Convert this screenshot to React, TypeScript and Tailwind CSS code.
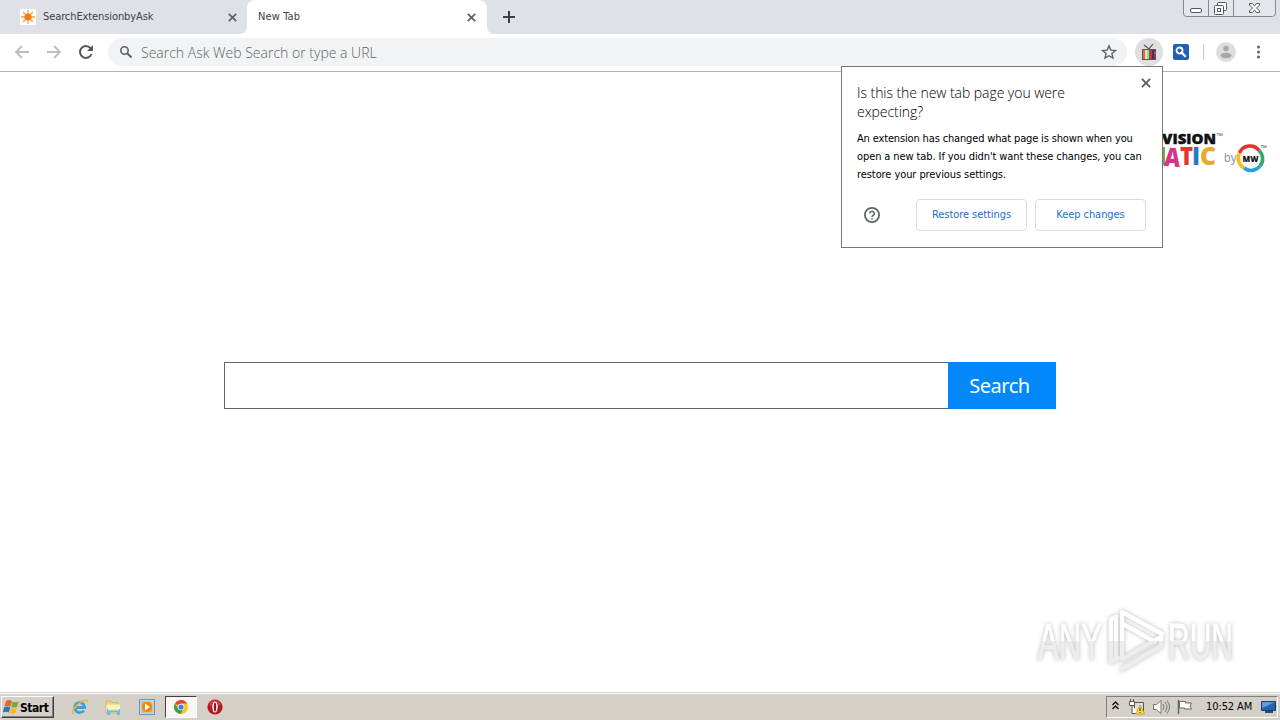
import { ReactNode } from 'react';

const CloseIcon = ({ size = 9 }: { size?: number }) => (
  <svg width={size} height={size} viewBox="0 0 9 9" stroke="#5f6368" strokeWidth="1.8">
    <path d="M.8.8l7.4 7.4M8.2.8L.8 8.2" />
  </svg>
);

const Favicon = () => (
  <svg width="16" height="16" viewBox="0 0 16 16">
    <path fill="#fff" d="M0 0h16v16H0z" />
    <path stroke="#f6a04d" strokeWidth="1.3" d="M8 1v14M1 8h14M3 3l10 10M13 3L3 13" />
    <circle cx="8" cy="8" r="3.6" fill="#ef7d1a" />
  </svg>
);

const WindowControls = () => (
  <svg width="94" height="18" viewBox="0 0 94 18" fill="none" stroke="#85888e">
    <path fill="#e3e6ec" d="M.5 0v13q0 3.5 3 3.5h86q3 0 3-3.5V0" />
    <path d="M25.500 0v16.500M50.500 0v16.500" />
    <g stroke="#53575e">
      <rect x="7.500" y="8.500" width="11" height="4" rx="1.500" fill="#fff" />
      <rect x="34.500" y="2.500" width="9" height="8" rx="1" fill="#fff" />
      <rect x="31.500" y="5.500" width="9" height="9" rx="1" fill="#fff" />
      <rect x="34.500" y="8.500" width="3" height="3" />
    </g>
    <path stroke="#53575e" fill="#fff" d="M66.500 3.500h3l2 2.500 2-2.500h3v1.500l-3 3 3 3v1.500h-3l-2-2.500-2 2.500h-3V11l3-3-3-3z" />
  </svg>
);

const TabStrip = () => (
  <div className="flex h-[34px] bg-[#dee1e8] text-[11px] text-[#3c4043]">
    <div className="flex w-[247px] items-center pl-5 pr-[10px]">
      <Favicon />
      <span className="ml-[7px] flex-1 pt-px tracking-[-0.1px]">SearchExtensionbyAsk</span>
      <CloseIcon />
    </div>
    <div className="relative flex w-[240px] items-center rounded-t-lg bg-white pl-[11px] pr-[11px]">
      <svg className="absolute -left-2 bottom-0" width="8" height="8" fill="#fff">
        <path d="M8 0v8H0q8 0 8-8" />
      </svg>
      <svg className="absolute -right-2 bottom-0" width="8" height="8" fill="#fff">
        <path d="M0 0v8h8q-8 0-8-8" />
      </svg>
      <span className="flex-1 pt-px tracking-[0.12px]">New Tab</span>
      <CloseIcon />
    </div>
    <div className="flex flex-1 items-center pl-4">
      <svg width="12" height="12" stroke="#3c4043" strokeWidth="2">
        <path d="M6 0v12M0 6h12" />
      </svg>
    </div>
    <div className="mr-[3px]">
      <WindowControls />
    </div>
  </div>
);

const TvIcon = () => (
  <svg width="16" height="17" viewBox="0 0 16 17">
    <path d="M3 1l5 4 4-5" fill="none" stroke="#555" strokeWidth="1.200" />
    <path fill="#5b5258" d="M1 5h14v11H1z" />
    <path fill="#ef625c" d="M2 6h2v9H2z" />
    <path fill="#f2dfac" d="M4 6h2v9H4z" />
    <path fill="#8ee092" d="M6 6h2v9H6z" />
    <path fill="#26874e" d="M8 6h1v9H8z" />
    <path fill="#d52b48" d="M9 6h2v9H9z" />
    <path fill="#64216b" d="M11 6h2v9h-2z" />
    <path fill="#b58b76" d="M13.500 8h1v2h-1z" />
  </svg>
);

const Toolbar = () => (
  <div className="flex h-[38px] items-center border-b border-[#b3b3b3] bg-white pb-px">
    <svg className="ml-[15px]" width="14" height="14" fill="none" stroke="#babcbe" strokeWidth="1.800">
      <path d="M14 7H1M7 1L1 7l6 6" />
    </svg>
    <svg className="ml-[18px]" width="14" height="14" fill="none" stroke="#babcbe" strokeWidth="1.800">
      <path d="M0 7h13M7 1l6 6-6 6" />
    </svg>
    <svg className="ml-[18px]" width="14" height="14" fill="none" stroke="#56595d" strokeWidth="2">
      <path d="M12.500 9A5.900 5.900 0 1 1 11.500 3.200L13 5" />
      <path fill="#56595d" stroke="none" d="M14 0v6H8z" />
    </svg>
    <div className="ml-[15px] flex h-7 w-[1019px] items-center rounded-full bg-[#f1f3f4] pl-3 pr-[10px]">
      <svg width="12" height="12" fill="none" stroke="#5f6368" strokeWidth="1.600">
        <circle cx="4.500" cy="4.500" r="3.700" />
        <path d="M7.200 7.200l4.300 4.300" strokeWidth="2" />
      </svg>
      <span className="ml-[9px] flex-1 font-['Open_Sans','Noto_Sans',sans-serif] text-[14px] font-light text-[#5f6368]">
        Search Ask Web Search or type a URL
      </span>
      <svg width="16" height="16" viewBox="0 0 16 16" fill="none" stroke="#5f6368" strokeWidth="1.400">
        <path d="M8 1.800l1.800 4.300 4.700.4-3.600 3 1.100 4.600L8 11.700l-4 2.400 1.100-4.600-3.600-3 4.700-.4z" />
      </svg>
    </div>
    <div className="ml-2 flex h-7 w-7 items-center justify-center rounded-full bg-[#dedfe0]">
      <TvIcon />
    </div>
    <svg className="ml-[10px]" width="16" height="16" fill="none" stroke="#fff" strokeWidth="1.800">
      <rect width="16" height="16" rx="2" fill="#2360b3" stroke="none" />
      <circle cx="6.500" cy="6.500" r="3" />
      <path d="M8.800 8.800l4 4" strokeWidth="2.200" />
    </svg>
    <div className="ml-[14px] h-4 w-px bg-[#c9cacc]" />
    <svg className="ml-3" width="20" height="20" fill="#a6a8aa">
      <circle cx="10" cy="10" r="10" fill="#dddedf" />
      <circle cx="10" cy="6.500" r="2.800" />
      <ellipse cx="10" cy="13.500" rx="5.500" ry="2.800" />
    </svg>
    <svg className="ml-5" width="5" height="14" fill="#5f6368">
      <circle cx="2.500" cy="2" r="1.500" />
      <circle cx="2.500" cy="7" r="1.500" />
      <circle cx="2.500" cy="12" r="1.500" />
    </svg>
  </div>
);

const BrandLogo = () => (
  <svg className="absolute right-0 top-[56px]" width="120" height="48" viewBox="1160 128 120 48">
    <g fontFamily="Open Sans, sans-serif" fontWeight="800">
      <text x="1162" y="143.500" fontSize="13.500" textLength="54" lengthAdjust="spacingAndGlyphs" fill="#111" stroke="#111" strokeWidth=".4">VISION</text>
      <path fill="#78a840" d="M1160 147h5v18h-5z" />
      <text x="1164.500" y="166.500" fontSize="26" textLength="16" lengthAdjust="spacingAndGlyphs" fill="#d5348b" transform="rotate(4 1172 157)">A</text>
      <text x="1180" y="164.500" fontSize="25" textLength="13" lengthAdjust="spacingAndGlyphs" fill="#e5352c">T</text>
      <path fill="#2879bd" d="M1183" />
      <text x="1192" y="164.500" fontSize="25" textLength="8" lengthAdjust="spacingAndGlyphs" fill="#2879bd">I</text>
      <text x="1200" y="164.500" fontSize="25" textLength="16" lengthAdjust="spacingAndGlyphs" fill="#eda829">C</text>
    </g>
    <text x="1216" y="138" fontSize="7" fill="#555" fontFamily="Liberation Sans">™</text>
    <text x="1224" y="162" fontSize="12" fill="#999" fontFamily="Liberation Sans">by</text>
    <g fill="none" strokeWidth="3.600">
      <path stroke="#e4322b" d="M1239.500 153A11.300 11.300 0 0 1 1259 150.500" />
      <path stroke="#36a66a" d="M1259 150.500A11.300 11.300 0 0 1 1260 166" />
      <path stroke="#2b9edb" d="M1260 166A11.300 11.300 0 0 1 1244 168" />
      <path stroke="#f6bd24" d="M1244 168A11.300 11.300 0 0 1 1239.500 153" />
    </g>
    <text x="1242.500" y="162" fontSize="9.500" fontWeight="800" textLength="16" lengthAdjust="spacingAndGlyphs" fill="#111" fontFamily="Open Sans">MW</text>
    <text x="1260" y="150" fontSize="7" fill="#555" fontFamily="Liberation Sans">™</text>
  </svg>
);

const Watermark = () => (
  <svg
    className="absolute right-0 top-[532px] drop-shadow-[0_0_2px_rgba(0,0,0,0.28)]"
    width="252"
    height="78"
    viewBox="1028 604 252 78"
  >
    <defs>
      <linearGradient id="mark" x1="0" x2="0" y1="610" y2="672" gradientUnits="userSpaceOnUse">
        <stop offset="0.5" stopColor="#fff" />
        <stop offset="0.5" stopColor="#ededed" />
      </linearGradient>
    </defs>
    <g fill="url(#mark)" stroke="url(#mark)" strokeWidth=".8" fontFamily="Liberation Sans, sans-serif" fontSize="50">
      <text x="1038" y="659" textLength="64" lengthAdjust="spacingAndGlyphs">ANY</text>
      <text x="1168" y="659" textLength="65" lengthAdjust="spacingAndGlyphs">RUN</text>
    </g>
    <g fill="none" stroke="url(#mark)" strokeWidth="4.500" strokeLinejoin="round" strokeLinecap="round">
      <path d="M1116 617l-5 2v43l7-4M1122 656v-44l40 22M1123 624l32 18" />
      <path d="M1116 617v42M1122 669l39-23v-9l-39 22" />
    </g>
  </svg>
);

const BubbleButton = ({ children }: { children: ReactNode }) => (
  <button className="h-8 w-[111px] rounded border border-[#dadce0] pt-px text-[11px] tracking-[-0.06px] text-[#1a6fc4]">
    {children}
  </button>
);

const NewTabBubble = () => (
  <div className="absolute left-[841px] top-[66px] h-[182px] w-[322px] border border-[#777] bg-white pl-[15px] pr-4 pt-4 text-black">
    <div className="absolute right-[11px] top-[11px]">
      <CloseIcon size={10} />
    </div>
    <h2 className="whitespace-nowrap font-['Open_Sans','Noto_Sans',sans-serif] text-[14px] font-light leading-[19px] tracking-[-0.06px]">
      Is this the new tab page you were
      <br />
      expecting?
    </h2>
    <p className="mt-[9px] whitespace-nowrap text-[11px] leading-[18px]">
      <span className="tracking-[-0.15px]">An extension has changed what page is shown when you</span>
      <br />
      <span className="tracking-[-0.1px]">open a new tab. If you didn't want these changes, you can</span>
      <br />
      <span className="tracking-[-0.08px]">restore your previous settings.</span>
    </p>
    <div className="mt-[15px] flex items-center gap-2">
      <svg className="ml-[7px] mr-auto" width="16" height="16" fill="none" stroke="#5f6368" strokeWidth="1.800">
        <circle cx="8" cy="8" r="7.100" />
        <path d="M5.800 6.400a2.200 2.200 0 1 1 3.300 1.900Q8 9 8 10M8 11.200v1.500" strokeWidth="1.500" />
      </svg>
      <BubbleButton>Restore settings</BubbleButton>
      <BubbleButton>Keep changes</BubbleButton>
    </div>
  </div>
);

const WindowsFlag = () => (
  <svg width="17" height="16" viewBox="0 0 17 16">
    <path fill="#e7652d" d="M3 2q3-2 6 0L7.500 7.500q-3-1.500-6 0z" />
    <path fill="#73ad39" d="M9.700 2.400q3 1.600 6-.2L14.200 7.700q-3 1.700-6 .1z" />
    <path fill="#2775bd" d="M1.300 8.300q3-1.600 6 0L5.800 13.500q-3-1.600-6 0z" />
    <path fill="#f4b72e" d="M8 8.600q3 1.600 6-.1l-1.500 5.400q-3 1.600-6 0z" />
  </svg>
);

const ChromeIcon = () => (
  <svg width="14" height="14" viewBox="0 0 14 14">
    <circle cx="7" cy="7" r="7" fill="#fbc31c" />
    <path fill="#df4434" d="M7 7L1 3.500A7 7 0 0 1 13.100 3.600H7z" />
    <path fill="#35a055" d="M7 14A7 7 0 0 1 1 3.500L4.200 9 8.500 10z" />
    <circle cx="7" cy="7" r="3.300" fill="#fff" />
    <circle cx="7" cy="7" r="2.600" fill="#3f7ee8" />
  </svg>
);

const Taskbar = () => (
  <div className="flex h-7 items-center border-t border-[#d6d2ca] bg-[#d4d0c8] pt-px text-[11px] text-black shadow-[inset_0_1px_0_#fff]">
    <div className="ml-px flex h-[22px] w-[53px] items-center border border-b-[#404040] border-l-white border-r-[#404040] border-t-white pl-px shadow-[inset_-1px_-1px_0_#808080]">
      <WindowsFlag />
      <span className="pt-px text-[12px] font-bold tracking-[-0.45px]">Start</span>
    </div>
    <svg className="ml-[17px]" width="18" height="18" viewBox="0 0 18 18" fill="none">
      <path stroke="#35a2dc" strokeWidth="2.800" d="M4.500 9.500h9.200A5 5 0 1 0 12.800 12.500" />
      <path stroke="#e9b53b" strokeWidth="1.400" d="M3 15.500C-2 16 4 7 11 3.500q6-3 5.500 1" />
    </svg>
    <svg className="ml-4" width="16" height="17" viewBox="0 0 16 17">
      <path fill="#efd271" stroke="#c7a94a" strokeWidth=".6" d="M1 2h5l1 1.500h6V14H1z" />
      <path fill="#fff3b1" d="M1.500 5.500H15V13H1.500z" />
      <path fill="#6ebbe5" d="M2 10h13v6h-3v-3H5.500v3H2z" />
      <path fill="#c2e7f6" d="M3 10h11v1.500H3z" />
    </svg>
    <svg className="ml-[18px]" width="16" height="16" viewBox="0 0 16 16">
      <path fill="#b9dcf3" stroke="#5598ce" d="M.5.5h15v15H.5z" />
      <path fill="#f6a53c" d="M2.500 2.500h9l2 2v9h-11z" />
      <circle cx="8" cy="8" r="5" fill="#ef850f" />
      <path fill="#fff" d="M6 4.500L11 8l-5 3.500z" />
    </svg>
    <div className="ml-[10px] flex h-[22px] w-8 items-center justify-center border border-b-white border-l-[#404040] border-r-white border-t-[#404040] bg-[#f7f6f4]">
      <ChromeIcon />
    </div>
    <svg className="ml-[10px]" width="16" height="16" viewBox="0 0 16 16">
      <circle cx="8" cy="8" r="7.600" fill="#b51820" />
      <path fill="#dd5557" d="M2 6a6.200 6.200 0 0 1 12 0q-6 3-12 0z" opacity=".6" />
      <ellipse cx="8" cy="8" rx="2.700" ry="5.500" fill="#fff" />
      <ellipse cx="8" cy="8" rx="1.200" ry="4.500" fill="#9b1119" />
    </svg>
    <div className="ml-auto mr-[2px] flex h-[22px] w-[172px] items-center border border-b-white border-l-[#808080] border-r-white border-t-[#808080]">
      <svg className="mb-[3px] ml-[5px]" width="7" height="9" fill="none" stroke="#111" strokeWidth="1.400">
        <path d="M.5 4l3-3 3 3M.5 8l3-3 3 3" />
      </svg>
      <svg className="ml-[10px]" width="16" height="16" viewBox="0 0 16 16" fill="none" stroke="#555">
        <path fill="#ddd" d="M5.500 3.500h9v8h-9z" />
        <path fill="#fff" d="M.5 2.500h5v4h-5zM1.500 0v2M4.500 0v2M3 7v7.500h9" />
        <path fill="#ffe02e" stroke="#b79a00" strokeWidth=".7" d="M11 6l4.600 9H6.500z" />
        <path stroke="#222" d="M11 9v3M11 13v1" />
      </svg>
      <svg className="ml-2" width="17" height="16" viewBox="0 0 17 16" fill="none" stroke="#777">
        <path fill="#fff" d="M.5 5.500h3L8 1.500v13L3.500 10.500h-3z" />
        <path d="M10 5q2 3 0 6M12 3q4 5 0 10M14 1.500q5 6.500 0 13" />
      </svg>
      <svg className="ml-[7px]" width="17" height="16" viewBox="0 0 17 16" stroke="#666">
        <path fill="#fff" d="M2.500 2.500h6v1.500h6l-1.500 3 1.500 3h-7V9h-5z" />
        <path d="M1.500 1v14" strokeWidth="1.500" />
      </svg>
      <span className="ml-3 whitespace-nowrap pt-px tracking-[-0.1px]">10:52 AM</span>
      <svg className="ml-auto mr-px" width="15" height="14" viewBox="0 0 15 14">
        <path fill="#2463b0" stroke="#173d72" d="M.5 1.500h14v9H.5z" />
        <path fill="#5d9ddd" d="M1 2h13L1 8z" />
        <path fill="#294d77" d="M4 11h8v2H4z" />
      </svg>
    </div>
  </div>
);

export default function App() {
  return (
    <div className="relative flex h-[720px] w-[1280px] flex-col overflow-hidden bg-white font-['DejaVu_Sans_Condensed','DejaVu_Sans',sans-serif]">
      <TabStrip />
      <Toolbar />
      <main className="relative flex flex-1 flex-col items-center pt-[290px]">
        <BrandLogo />
        <div className="flex h-[47px] w-[832px]">
          <input className="min-w-0 flex-1 border border-r-0 border-[#666] bg-white px-3 outline-none" />
          <button className="w-[108px] bg-[#0288fa] pr-[5px] font-['Noto_Sans',sans-serif] text-[20px] tracking-[-0.5px] text-white">
            Search
          </button>
        </div>
        <Watermark />
      </main>
      <Taskbar />
      <NewTabBubble />
    </div>
  );
}
